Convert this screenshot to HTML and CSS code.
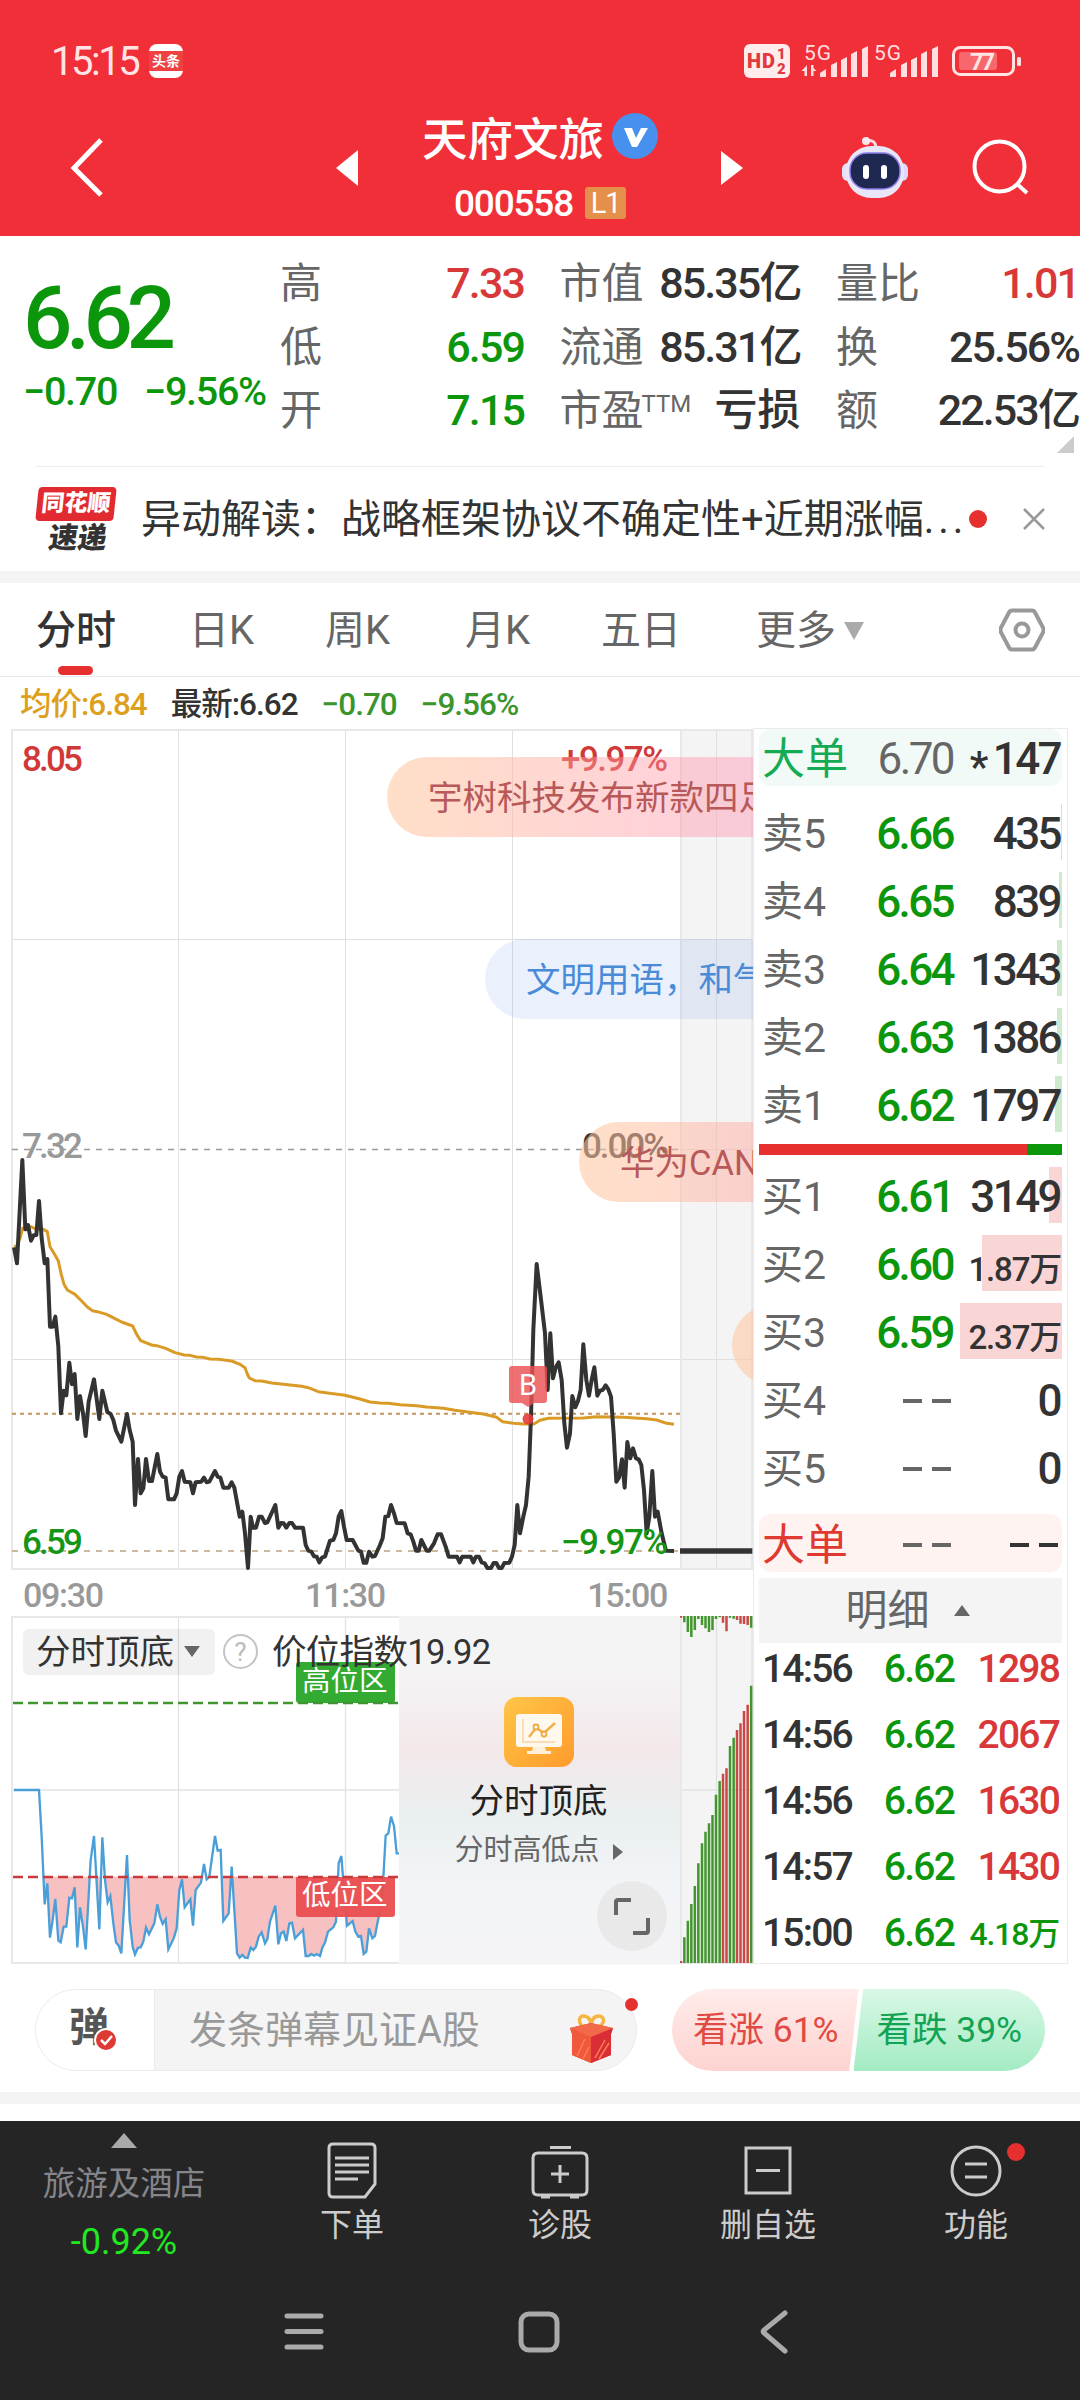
FILE: index.html
```
<!DOCTYPE html>
<html lang="zh-CN">
<head>
    <meta charset="UTF-8">
    <meta name="viewport" content="width=device-width, initial-scale=1.0">
    <title>天府文旅 000558</title>
    <link rel="stylesheet" href="styles.css">
</head>
<body>
    <header class="header">
        <div class="status-bar">
            <span class="clock">15:15</span>
            <span class="app-badge"><span>头条</span></span>
            <svg class="status-icons" width="280" height="44" viewBox="742 39 280 44">
                <rect x="744" y="44" width="46" height="34" rx="6" fill="#ffecec"/>
                <text x="747" y="68" font-size="20" font-weight="900" fill="#e03a40" textLength="28">HD</text>
                <text x="777" y="59" font-size="15" font-weight="900" fill="#e03a40">1</text>
                <text x="777" y="74" font-size="15" font-weight="900" fill="#e03a40">2</text>
                <g fill="#ffdfe0">
                    <text x="804" y="60" font-size="21" textLength="27">5G</text>
                    <text x="874" y="60" font-size="21" textLength="27">5G</text>
                    <path d="M807 65v11h-2.500v-5h-3zM811 76v-11h2.500v3l3 3h-3v5z"/>
                    <path d="M820 77v-4l6-4v8zM831 77v-12l6-3v15zM841 77v-17l6-3v20zM851 77v-23l6-3v26zM862 77v-28l6-3v31z"/>
                    <path d="M890 77v-4l6-4v8zM901 77v-12l6-3v15zM911 77v-17l6-3v20zM921 77v-23l6-3v26zM932 77v-28l6-3v31z"/>
                    <rect x="1017" y="57" width="4" height="9" rx="1.500"/>
                </g>
                <rect x="953.500" y="47.500" width="60" height="27" rx="7" fill="none" stroke="#ffe4e4" stroke-width="3"/>
                <rect x="959" y="52" width="38" height="18" rx="3" fill="#f7686d"/>
                <text x="970" y="70" font-size="24" font-weight="700" fill="#ffe4e4" textLength="25">77</text>
            </svg>
        </div>
        <div class="title-bar">
            <svg class="back" width="40" height="64" viewBox="0 0 40 64"><path d="M35 4L8 32l27 27" fill="none" stroke="#fff" stroke-width="5"/></svg>
            <svg class="prev" width="22" height="36" viewBox="0 0 22 36"><path d="M22 0v36L0 18z" fill="#fff"/></svg>
            <div class="stock">
                <div class="stock-name">天府文旅
                    <svg width="46" height="46" viewBox="0 0 46 46"><circle cx="23" cy="23" r="23" fill="#4790ee"/><path d="M12 15h8l4 10 5-10h7L25 34h-5z" fill="#fff"/></svg>
                </div>
                <div class="stock-code"><span>000558</span><em>L1</em></div>
            </div>
            <svg class="next" width="22" height="34" viewBox="0 0 22 34"><path d="M0 0v34l22-17z" fill="#fff"/></svg>
            <svg class="robot" width="68" height="64" viewBox="841 136 68 64">
                <path d="M866 141c7-2 10 2 10 7" fill="none" stroke="#f9d9e4" stroke-width="3"/>
                <circle cx="866" cy="141" r="4" fill="#fbe6ee"/>
                <rect x="842" y="163" width="12" height="18" rx="6" fill="#e6e3f7"/>
                <rect x="896" y="163" width="12" height="18" rx="6" fill="#dcdaf6"/>
                <rect x="846" y="146" width="58" height="52" rx="25" fill="#e9e6f8"/>
                <rect x="850" y="153" width="50" height="36" rx="17" fill="#1f2850" stroke="#8b7de8" stroke-width="1.500"/>
                <rect x="863" y="165" width="6" height="14" rx="3" fill="#fff"/>
                <rect x="881" y="165" width="6" height="14" rx="3" fill="#fff"/>
            </svg>
            <svg class="search" width="58" height="58" viewBox="972 141 58 58"><circle cx="999.500" cy="168.500" r="25" fill="none" stroke="#fff" stroke-width="4"/><path d="M1017 186l10 9" stroke="#fff" stroke-width="4"/></svg>
        </div>
    </header>

    <section class="quote">
        <div class="price-box">
            <div class="price green">6.62</div>
            <div class="change green"><span>−0.70</span><span>−9.56%</span></div>
        </div>
        <dl class="stats">
            <div><dt>高</dt><dd class="red">7.33</dd></div>
            <div><dt>市值</dt><dd>85.35亿</dd></div>
            <div><dt>量比</dt><dd class="red">1.01</dd></div>
            <div><dt>低</dt><dd class="green">6.59</dd></div>
            <div><dt>流通</dt><dd>85.31亿</dd></div>
            <div><dt>换</dt><dd>25.56%</dd></div>
            <div><dt>开</dt><dd class="green">7.15</dd></div>
            <div><dt>市盈<sup>TTM</sup></dt><dd class="text">亏损</dd></div>
            <div><dt>额</dt><dd>22.53亿</dd></div>
        </dl>
        <span class="corner"></span>
    </section>

    <section class="news">
        <div class="news-logo"><b>同花顺</b><i>速递</i></div>
        <p>异动解读：战略框架协议不确定性+近期涨幅<span>...</span></p>
        <span class="dot"></span>
        <svg width="22" height="22" viewBox="0 0 22 22"><path d="M1 1l20 20M21 1L1 21" stroke="#999" stroke-width="2.500"/></svg>
    </section>

    <nav class="tabs">
        <a class="active">分时</a>
        <a>日K</a>
        <a>周K</a>
        <a>月K</a>
        <a>五日</a>
        <a>更多<span class="caret"></span></a>
        <svg width="46" height="44" viewBox="0 0 46 44"><path d="M13 2.500h20q2 0 3 2l8 15q1 2.500 0 5l-8 15q-1 2-3 2H13q-2 0-3-2l-8-15q-1-2.500 0-5l8-15q1-2 3-2z" fill="none" stroke="#999" stroke-width="4"/><circle cx="23" cy="22" r="6.500" fill="none" stroke="#999" stroke-width="4"/></svg>
    </nav>

    <div class="summary">
        <span class="avg">均价:6.84</span>
        <span>最新:6.62</span>
        <span class="drop">−0.70</span>
        <span class="drop">−9.56%</span>
    </div>

    <main class="board">
        <div class="charts">
            <div class="price-chart">
                <svg width="742" height="841" viewBox="11 729 742 841">
                    <rect x="680" y="729" width="73" height="841" fill="#f4f4f4"/>
                    <path d="M178.500 729v841M345.500 729v841M512.500 729v841M716.500 729v841M12 939.500h741M12 1359.500h741M680 1149.500h73" stroke="#e0e0e0" fill="none"/>
                    <path d="M11 730h742M11 1569h742M12 729v841M681 729v841M752 729v841" stroke="#e8e8e8" stroke-width="2" fill="none"/>
                    <path d="M12 1149.500h668" stroke="#999" stroke-width="1.600" stroke-dasharray="6 6"/>
                    <path d="M12 1413.700h668" stroke="#c4935c" stroke-width="2" stroke-dasharray="4 4"/>
                    <path d="M12 1551h668" stroke="#b9a27c" stroke-width="1.600" stroke-dasharray="6 6"/>
                    <g transform="translate(0 1100) scale(.33333)" fill="none" stroke-linejoin="round">
                        <polyline stroke="#d99b26" stroke-width="9" points="42,440 50,438 60,415 68,385 92,380 110,388 130,388 142,395 150,440 165,465 175,483 183,520 192,553 202,570 225,583 245,603 262,621 277,632 292,635 320,643 345,656 365,666 398,678 410,703 422,722 455,735 470,737 497,745 525,758 553,765 570,766 590,771 610,772 630,777 655,778 695,783 720,793 735,803 742,822 748,834 765,842 785,843 815,849 905,859 925,863 955,875 1000,881 1035,886 1080,897 1110,906 1140,909 1165,910 1200,914 1250,917 1280,921 1330,925 1365,931 1420,938 1450,942 1490,952 1508,965 1540,970 1570,972 1602,972 1620,961 1645,955 1750,954 1790,950 1870,952 1940,956 1970,960 2000,970 2022,973"/>
                        <polyline stroke="#333" stroke-width="12" points="42,442 51,490 67,180 76,388 84,375 93,422 101,406 109,405 117,303 125,415 134,490 142,477 150,680 158,680 166,650 175,740 183,940 191,872 199,886 208,788 216,853 224,822 232,957 240,888 249,940 257,1008 266,905 282,838 298,957 307,872 322,936 332,942 340,960 348,992 364,1025 381,942 389,990 398,1025 405,1215 414,1077 422,1180 430,1165 438,1077 447,1143 456,1143 472,1062 480,1115 488,1130 497,1133 505,1198 522,1198 530,1180 538,1130 546,1113 554,1145 571,1147 579,1180 587,1147 604,1145 612,1133 620,1147 628,1145 645,1113 653,1130 661,1133 670,1163 686,1163 695,1147 703,1163 719,1250 727,1235 735,1300 744,1404 752,1250 759,1283 768,1283 777,1250 785,1250 795,1269 802,1267 826,1215 835,1283 843,1269 851,1270 859,1283 868,1269 876,1269 885,1283 909,1283 917,1335 925,1352 934,1355 942,1369 950,1370 958,1387 967,1372 975,1370 990,1322 1000,1320 1008,1300 1016,1250 1024,1233 1032,1280 1040,1320 1058,1320 1075,1352 1083,1355 1091,1388 1099,1388 1107,1355 1117,1370 1125,1368 1140,1335 1148,1315 1156,1250 1165,1248 1173,1215 1182,1240 1190,1269 1214,1270 1223,1300 1232,1303 1240,1325 1248,1352 1256,1352 1264,1320 1280,1352 1288,1352 1302,1330 1313,1303 1323,1303 1337,1340 1346,1370 1371,1370 1379,1387 1387,1370 1412,1370 1420,1387 1428,1370 1437,1370 1445,1387 1454,1390 1462,1404 1473,1404 1481,1389 1489,1389 1497,1404 1505,1404 1513,1389 1528,1388 1536,1370 1544,1335 1552,1215 1560,1300 1570,1250 1578,1215 1586,1130 1593,950 1600,690 1610,492 1622,590 1635,700 1643,870 1651,700 1659,835 1667,803 1676,787 1685,840 1693,970 1701,1043 1710,1000 1717,888 1726,922 1734,903 1742,870 1750,733 1759,840 1767,887 1775,840 1783,802 1792,887 1800,872 1808,870 1817,856 1825,868 1833,890 1841,1000 1849,1145 1857,1133 1866,1078 1874,1163 1882,1026 1891,1075 1899,1045 1908,1075 1916,1078 1924,1095 1932,1170 1940,1300 1948,1250 1957,1113 1965,1250 1973,1235 1985,1300 1998,1352 2022,1353"/>
                        <path d="M2040 1353h217" stroke="#333" stroke-width="16"/>
                    </g>
                    <path d="M512 1366h32q3 0 3 3v31q0 3-3 3h-10l-6 4-6-4h-10q-3 0-3-3v-31q0-3 3-3z" fill="#ea5054" opacity=".82"/>
                    <text x="519" y="1395" font-size="29" fill="#fff">B</text>
                    <circle cx="528" cy="1419" r="5.500" fill="#e53c3c" opacity=".9"/>
                    <g class="scale">
                        <text x="22" y="771" fill="#d23838" textLength="61">8.05</text>
                        <text x="561" y="771" fill="#d23838" textLength="107">+9.97%</text>
                        <text x="22" y="1158" fill="#999" textLength="61">7.32</text>
                        <text x="582" y="1158" fill="#333" textLength="87">0.00%</text>
                        <text x="22" y="1554" fill="#149614" textLength="61">6.59</text>
                        <text x="561" y="1554" fill="#149614" textLength="107">−9.97%</text>
                    </g>
                </svg>
                <div class="danmaku">
                    <span class="bullet b1">宇树科技发布新款四足</span>
                    <span class="bullet b2">文明用语，和气</span>
                    <span class="bullet b3">华为CANN</span>
                    <span class="bullet b4"></span>
                </div>
            </div>

            <div class="time-axis"><span>09:30</span><span>11:30</span><span>15:00</span></div>

            <div class="sub-chart">
                <svg width="742" height="348" viewBox="11 1616 742 348">
                    <defs>
                        <clipPath id="lowZone"><rect x="0" y="920" width="1197" height="260"/></clipPath>
                        <polyline id="indexLine" points="42,660 117,660 125,800 134,1003 142,940 150,1103 158,1050 166,987 175,1112 182,1117 191,1070 199,1070 208,983 216,985 224,952 232,1132 240,1012 249,1070 257,1138 272,870 282,798 298,1078 307,802 315,930 323,997 331,978 340,1060 348,1117 356,1127 364,1150 381,855 389,1050 398,1130 405,1153 414,1133 422,1132 430,1115 438,1073 447,1093 463,1060 472,1003 480,1040 488,1062 497,1048 505,1138 513,1122 522,1103 530,1075 538,960 546,928 554,1012 571,988 579,1067 587,960 603,938 612,882 620,928 628,920 645,798 653,842 662,840 670,1053 686,1030 695,890 703,1020 711,1150 719,1163 727,1155 735,1163 743,1164 752,1133 760,1140 768,1130 776,1100 785,1087 795,1120 802,1108 810,1055 826,1007 835,1123 843,1090 851,1085 859,1113 868,1060 876,1058 885,1105 909,1080 917,1158 926,1158 934,1152 942,1157 950,1152 960,1158 967,1133 975,1118 984,1085 1000,1072 1008,1055 1016,880 1024,858 1032,960 1041,1067 1058,1053 1066,1085 1075,1100 1083,1098 1091,1152 1099,1145 1107,1075 1117,1105 1125,1098 1133,1055 1141,1020 1148,960 1157,797 1165,790 1173,740 1182,768 1190,850 1197,850"/>
                    </defs>
                    <rect x="680" y="1616" width="73" height="348" fill="#f4f4f4"/>
                    <path d="M178.500 1616v348M345.500 1616v348M716.500 1616v348M12 1790h741" stroke="#e2e2e2" stroke-width="1.300"/>
                    <path d="M11 1617h669M11 1963h742M12 1616v348M681 1616v348M752 1616v348" stroke="#e8e8e8" stroke-width="2"/>
                    <g transform="translate(0 1570) scale(.33333)">
                        <use href="#indexLine" fill="#f7c0c1" clip-path="url(#lowZone)"/>
                        <use href="#indexLine" fill="none" stroke="#4a9fd8" stroke-width="7"/>
                    </g>
                    <!-- auction volume: matched below, unmatched above -->
                    <g transform="translate(390 1570) scale(.33333)" fill="none" stroke-width="7.500">
                        <path stroke="#43962f" d="M883 1179V1102M893.500 1179V1052M904 1179V1002M914.500 1179V948M925 1179V880M936 1179V820M946.500 1179V785M957 1179V760M967.500 1179V735M978 1179V674M989 1179V633M1020 1179V528M1031 1179V503M1083.500 1179V347"/>
                        <path stroke="#cc4747" d="M873 1179V1173M999 1179V611M1009.500 1179V595M1041 1179V480M1051.500 1179V460M1062 1179V423M1073 1179V404"/>
                        <path stroke="#43962f" d="M883 138V157M893.500 138V186M904 138V201M914.500 138V180M925 138V147M936 138V165M946.500 138V175M957 138V186M967.500 138V180M978 138V147M989 138V142M1020 138V143M1031 138V146M1083.500 138V173"/>
                        <path stroke="#cc4747" d="M873 138V143M999 138V158M1009.500 138V184M1041 138V150M1051.500 138V161M1062 138V162M1073 138V165"/>
                    </g>
                    <rect x="296" y="1662" width="99" height="41" rx="3" fill="#33ab33"/>
                    <path d="M296 1877h99v37q0 3-3 3h-93q-3 0-3-3z" fill="#ea4e50" opacity=".95"/>
                    <text x="302" y="1691" font-size="28.500" fill="#fff">高位区</text>
                    <text x="302" y="1905" font-size="28.500" fill="#fff">低位区</text>
                    <path d="M13 1703h385" stroke="#3f9630" stroke-width="2.400" stroke-dasharray="10 5"/>
                    <path d="M13 1877h385" stroke="#c93a3a" stroke-width="2.400" stroke-dasharray="10 5"/>
                </svg>
                <div class="promo">
                    <svg width="70" height="70" viewBox="0 0 70 70">
                        <defs>
                            <linearGradient id="gold" x1="0" y1="0" x2="1" y2="1"><stop offset="0" stop-color="#ffc648"/><stop offset="1" stop-color="#ff9a2b"/></linearGradient>
                        </defs>
                        <rect width="70" height="70" rx="13" fill="url(#gold)"/>
                        <rect x="12" y="17" width="46" height="33" rx="3" fill="#fff8ec"/>
                        <path d="M29 50h12l1 4h5v3H23v-3h5z" fill="#fff1d9"/>
                        <path d="M19 22v23h32" fill="none" stroke="#fbdcb8" stroke-width="2"/>
                        <path d="M25 40l7-9 8 5 11-10" fill="none" stroke="#f2b04c" stroke-width="2.500"/>
                        <circle cx="32" cy="30" r="2.500" fill="#fff" stroke="#f0a73c" stroke-width="1.800"/>
                        <circle cx="40" cy="37" r="2.500" fill="#fff" stroke="#f0a73c" stroke-width="1.800"/>
                    </svg>
                    <h3>分时顶底</h3>
                    <p>分时高低点<span class="arrow"></span></p>
                </div>
                <div class="indicator">
                    <span class="picker">分时顶底<span class="caret"></span></span>
                    <span class="help">?</span>
                    <span class="index">价位指数19.92</span>
                </div>
                <svg class="expand" width="70" height="70" viewBox="0 0 70 70"><circle cx="35" cy="35" r="35" fill="#e9e9ea"/><path d="M19 34V21q0-2 2-2h13M51 37v13q0 2-2 2H36" fill="none" stroke="#666" stroke-width="4"/></svg>
            </div>
        </div>

        <aside class="depth">
            <div class="row big sell"><span>大单</span><span>6.70</span><span><small>*</small>147</span></div>
            <div class="row"><span>卖5</span><span>6.66</span><span>435</span><i style="width:1px"></i></div>
            <div class="row"><span>卖4</span><span>6.65</span><span>839</span><i style="width:3px"></i></div>
            <div class="row"><span>卖3</span><span>6.64</span><span>1343</span><i style="width:5px"></i></div>
            <div class="row"><span>卖2</span><span>6.63</span><span>1386</span><i style="width:5px"></i></div>
            <div class="row"><span>卖1</span><span>6.62</span><span>1797</span><i style="width:7px"></i></div>
            <div class="ratio"><i style="width:268px"></i></div>
            <div class="row buy"><span>买1</span><span>6.61</span><span>3149</span><i style="width:13px"></i></div>
            <div class="row buy"><span>买2</span><span>6.60</span><span class="wan">1.87万</span><i style="width:80px"></i></div>
            <div class="row buy"><span>买3</span><span>6.59</span><span class="wan">2.37万</span><i style="width:102px"></i></div>
            <div class="row none"><span>买4</span><span><s></s><s></s></span><span>0</span></div>
            <div class="row none"><span>买5</span><span><s></s><s></s></span><span>0</span></div>
            <div class="row big bid none"><span>大单</span><span><s></s><s></s></span><span><s></s><s></s></span></div>
            <div class="detail">明细<span></span></div>
            <div class="trade"><span>14:56</span><span>6.62</span><span class="red">1298</span></div>
            <div class="trade"><span>14:56</span><span>6.62</span><span class="red">2067</span></div>
            <div class="trade"><span>14:56</span><span>6.62</span><span class="red">1630</span></div>
            <div class="trade"><span>14:57</span><span>6.62</span><span class="red">1430</span></div>
            <div class="trade"><span>15:00</span><span>6.62</span><span class="wan green">4.18万</span></div>
        </aside>
    </main>

    <section class="comment-bar">
        <div class="comment">
            <div class="toggle">弹<svg width="24" height="24" viewBox="0 0 24 24"><circle cx="12" cy="12" r="11" fill="#dd3a34" stroke="#fff" stroke-width="2"/><path d="M7 12l4 4 7-8" fill="none" stroke="#fff" stroke-width="2.500"/></svg></div>
            <div class="field">发条弹幕见证A股</div>
            <svg class="gift" width="46" height="50" viewBox="0 0 46 50">
                <path d="M22 15C8 16 8 2 15 3s7 7 7 12c0-5 1-12 8-12s7 12-8 12z" fill="none" stroke="#f5b53f" stroke-width="3.500"/>
                <path d="M1 15l21-5 22 5-2 6v21l-20 8L3 42V21z" fill="#ea4632"/>
                <path d="M1 15l21 8v27L3 42V21z" fill="#f0593c"/>
                <path d="M22 23l22-8-2 6v21l-20 8z" fill="#d92e35"/>
                <path d="M1 15l21-5 22 5-22 9z" fill="#f26a4a"/>
                <path d="M8 43l8-17M14 46l6-12M26 45l10-18M30 46l10-16" stroke="#ff7d55" stroke-width="1.500"/>
            </svg>
            <span class="dot"></span>
        </div>
        <div class="vote"><span class="up">看涨 61%</span><span class="down">看跌 39%</span></div>
    </section>
    <div class="band"></div>

    <footer class="footer">
        <div class="menu">
            <div class="sector"><span class="tri"></span><p>旅游及酒店</p><b>-0.92%</b></div>
            <a><svg width="60" height="60" viewBox="0 0 60 60"><path d="M11 4h38q4 0 4 4v36l-10 13H11q-4 0-4-4V8q0-4 4-4zM13 18h34M13 25h34M13 32h34M13 39h23" /></svg>下单</a>
            <a><svg width="60" height="60" viewBox="0 0 60 60"><path d="M8 13h44q5 0 5 5v32q0 5-5 5H8q-5 0-5-5V18q0-5 5-5zM20 7.500h21M30 25v18M21 34h18M11 57h9M40 57h9"/></svg>诊股</a>
            <a><svg width="60" height="60" viewBox="0 0 60 60"><path d="M8 8h44v45H8zM18 30.500h24"/></svg>删自选</a>
            <a><svg width="60" height="60" viewBox="0 0 60 60"><circle cx="30" cy="31" r="24"/><path d="M19 24h22M19 37h22"/></svg>功能<span class="dot"></span></a>
        </div>
        <div class="system-nav">
            <svg width="44" height="44" viewBox="0 0 44 44"><path d="M5 6h34M5 21.500h34M5 37h34"/></svg>
            <svg width="44" height="44" viewBox="0 0 44 44"><rect x="4" y="4" width="36" height="36" rx="8"/></svg>
            <svg width="44" height="44" viewBox="0 0 44 44"><path d="M33 3L12 20q-1.500 1.500 0 3L33 41"/></svg>
        </div>
    </footer>
</body>
</html>
```
FILE: styles.css
```
* {
    margin: 0;
    padding: 0;
    box-sizing: border-box;
}

body {
    width: 1080px;
    height: 2400px;
    overflow: hidden;
    font-family: Roboto, "Noto Sans CJK SC", sans-serif;
    background: #fff;
    color: #333;
}

svg {
    display: block;
    flex: none;
}

i, em {
    font-style: normal;
}

.red {
    color: #d93838;
}

.green {
    color: #0c960c;
}

.dot {
    width: 18px;
    height: 18px;
    border-radius: 50%;
    background: #e63030;
}

/* header */
.header {
    height: 236px;
    background: #f12f38;
    color: #fff;
}

.status-bar {
    display: flex;
    align-items: center;
    height: 122px;
    padding-left: 51px;
}

.clock {
    width: 98px;
    font-size: 40px;
    letter-spacing: -2.500px;
    color: #ffe4e5;
}

.app-badge {
    display: flex;
    align-items: center;
    width: 34px;
    height: 34px;
    border-radius: 8px;
    background: #fff;
}

.app-badge span {
    width: 34px;
    background: #f04142;
    font-size: 14px;
    font-weight: 700;
    line-height: 20px;
    text-align: center;
}

.status-icons {
    margin-left: 559px;
}

.title-bar {
    display: flex;
    align-items: center;
    height: 114px;
    padding-bottom: 22px;
    padding-left: 66px;
}

.prev {
    margin-left: 230px;
}

.stock {
    width: 236px;
    margin: -6px 63px 0 64px;
}

.stock-name {
    display: flex;
    align-items: center;
    justify-content: space-between;
    height: 58px;
    font-size: 45.500px;
    font-weight: 500;
    white-space: nowrap;
}

.stock-code {
    display: flex;
    align-items: center;
    gap: 12px;
    height: 40px;
    margin: 18px 0 0 32px;
    font-size: 37px;
    font-weight: 500;
    letter-spacing: -1.200px;
}

.stock-code em {
    width: 41px;
    height: 32px;
    border-radius: 3px;
    background: #e48f4a;
    font-size: 29px;
    font-weight: 400;
    line-height: 33px;
    text-align: center;
}

.robot {
    margin-left: 98px;
}

.search {
    margin-left: 63px;
}

/* quote */
.quote {
    position: relative;
    display: flex;
    height: 231px;
    padding-top: 16px;
}

.quote::after {
    content: "";
    position: absolute;
    left: 35px;
    right: 35px;
    bottom: 0;
    height: 1px;
    background: #eee;
}

.price-box {
    width: 280px;
    padding-left: 23px;
    white-space: nowrap;
}

.price {
    margin-top: 20px;
    font-size: 87px;
    font-weight: 500;
    line-height: 92px;
    letter-spacing: -6.500px;
}

.change {
    display: flex;
    gap: 27px;
    margin-top: 5px;
    font-size: 39.500px;
    font-weight: 500;
    line-height: 46px;
    letter-spacing: -1.300px;
}

.stats {
    display: grid;
    grid-template-columns: 243px 240px 242px;
    grid-auto-rows: 63.500px;
    column-gap: 36.500px;
    font-size: 42px;
    line-height: 63px;
}

.stats div {
    display: flex;
    justify-content: space-between;
    white-space: nowrap;
}

.stats dt {
    color: #666;
}

.stats dd {
    margin-right: -1px;
    font-size: 43px;
    font-weight: 500;
    letter-spacing: -1.900px;
}

.stats .text {
    letter-spacing: 0;
}

.stats sup {
    margin-left: -2px;
    font-size: 24px;
    line-height: 1;
    vertical-align: 13px;
}

.corner {
    position: absolute;
    right: 6px;
    bottom: 14px;
    border-bottom: 17px solid #ccc;
    border-left: 17px solid transparent;
}

/* news */
.news {
    display: flex;
    align-items: center;
    height: 116px;
    padding-left: 37px;
    border-bottom: 12px solid #f4f4f4;
}

.news p {
    width: 819px;
    margin: -6px 0 0 22px;
    font-size: 40px;
    white-space: nowrap;
}

.news p span {
    letter-spacing: 4px;
}

.news .dot {
    margin-left: 9px;
}

.news svg {
    margin-left: 36px;
}

.news-logo {
    width: 82px;
    padding-top: 4px;
    text-align: center;
}

.news-logo b {
    display: block;
    width: 78px;
    height: 34px;
    border-radius: 4px;
    background: #e22b31;
    color: #fff;
    font-size: 23px;
    font-weight: 900;
    line-height: 33px;
    transform: skewX(-6deg);
}

.news-logo i {
    display: block;
    font-size: 29px;
    font-weight: 900;
    line-height: 34px;
    transform: skewX(-8deg);
}

/* tabs */
.tabs {
    display: grid;
    grid-template-columns: 153px 136px 140px 136px 155px 243px 46px;
    align-items: center;
    height: 94px;
    padding-left: 36px;
    border-bottom: 1px solid #e8e8e8;
    font-size: 40px;
    color: #666;
}

.tabs a {
    position: relative;
    margin-top: -6px;
    white-space: nowrap;
}

.tabs .active {
    color: #333;
    font-weight: 500;
}

.tabs .active::after {
    content: "";
    position: absolute;
    left: 22px;
    bottom: -19px;
    width: 35px;
    height: 9px;
    border-radius: 5px;
    background: #e63030;
}

.caret {
    display: inline-block;
    border-top: 18px solid #aaa;
    border-right: 10px solid transparent;
    border-left: 10px solid transparent;
}

.tabs .caret {
    margin-left: 8px;
    vertical-align: 4px;
}

.summary {
    display: flex;
    gap: 24px;
    height: 51px;
    padding-left: 20px;
    font-size: 31.500px;
    font-weight: 500;
    line-height: 56px;
    letter-spacing: -1px;
}

.summary .avg {
    color: #dda01c;
}

.summary .drop {
    color: #3b942c;
}

/* charts */
.board {
    display: flex;
    height: 1236px;
    padding-left: 11px;
}

.charts {
    width: 742px;
    padding-top: 1px;
}

.price-chart,
.sub-chart {
    position: relative;
}

.scale {
    font-size: 35px;
    font-weight: 500;
}

.danmaku {
    position: absolute;
    inset: 0;
    overflow: hidden;
}

.bullet {
    position: absolute;
    width: 420px;
    height: 80px;
    padding-left: 41px;
    border-radius: 40px;
    background: linear-gradient(90deg, rgba(255, 200, 160, .58), rgba(255, 150, 160, .42) 60%, rgba(255, 150, 190, .46));
    color: #b85858;
    font-size: 34.500px;
    line-height: 82px;
    white-space: nowrap;
}

.b1 {
    left: 376px;
    top: 28px;
}

.b2 {
    left: 474px;
    top: 210px;
    background: rgba(90, 150, 240, .13);
    color: #4a8bd8;
}

.b3 {
    left: 568px;
    top: 393px;
}

.b4 {
    left: 721px;
    top: 576px;
}

.time-axis {
    display: flex;
    justify-content: space-between;
    height: 46px;
    padding: 2px 86px 0 12px;
    color: #999;
    font-size: 34px;
    font-weight: 500;
    line-height: 46px;
    letter-spacing: -1.300px;
}

.promo {
    position: absolute;
    left: 388px;
    top: 0;
    width: 281px;
    height: 349px;
    padding-top: 81px;
    background: linear-gradient(#f5f4f5 15%, #f3e8ea 38%, #eaeff0 58%, #f2f5f7 78%, #f5f4f7);
    text-align: center;
}

.promo svg {
    margin: 0 auto 0 105px;
}

.promo h3 {
    margin: 7px 2px 0 0;
    color: #222;
    font-size: 34.500px;
    font-weight: 400;
    line-height: 54px;
}

.promo p {
    margin-right: 2px;
    color: #666;
    font-size: 29px;
    line-height: 45px;
}

.arrow {
    display: inline-block;
    margin-left: 13px;
    border-top: 8px solid transparent;
    border-bottom: 8px solid transparent;
    border-left: 10px solid #666;
}

.indicator {
    position: absolute;
    left: 12px;
    top: 12px;
    display: flex;
    align-items: center;
    height: 47px;
    font-size: 34.500px;
}

.picker {
    width: 192px;
    padding-left: 13px;
    border-radius: 6px;
    background: rgba(0, 0, 0, .055);
    line-height: 46px;
    white-space: nowrap;
}

.picker .caret {
    margin-left: 10px;
    border-width: 11px 8px 0;
    border-top-color: #666;
    vertical-align: 7px;
}

.help {
    width: 35px;
    height: 35px;
    margin: 0 14px 0 8px;
    border: 2px solid #c4c4c4;
    border-radius: 50%;
    color: #bbb;
    font-size: 26px;
    line-height: 32px;
    text-align: center;
}

.index {
    margin-top: -5px;
    white-space: nowrap;
    letter-spacing: -.700px;
}

.expand {
    position: absolute;
    left: 586px;
    top: 265px;
}

/* order book */
.depth {
    width: 315px;
    padding: 0 5px;
    border: 1px solid #ebebeb;
    font-size: 44px;
    letter-spacing: -2.600px;
}

.row {
    position: relative;
    display: grid;
    grid-template-columns: 90px 101px 107px;
    height: 56px;
    margin-bottom: 12px;
    padding-left: 3px;
    line-height: 61px;
    text-align: right;
}

.row span {
    position: relative;
    z-index: 1;
    font-weight: 500;
    white-space: nowrap;
}

.row span:first-child {
    color: #666;
    font-size: 41px;
    font-weight: 400;
    letter-spacing: 0;
    text-align: left;
}

.row span:nth-child(2) {
    color: #0c960c;
}

.row i {
    position: absolute;
    top: 0;
    right: 0;
    height: 56px;
    background: #cdeacd;
}

.buy i {
    background: #fad5d6;
}

.depth .wan {
    left: 1px;
    font-size: 33px;
    letter-spacing: -1.200px;
    line-height: 69px;
}

.row.big {
    height: 57px;
    margin-bottom: 18px;
    border-radius: 12px;
    line-height: 60px;
}

.sell {
    background: #f1faf6;
}

.row.sell span:first-child {
    color: #14ab54;
}

.row.sell span:nth-child(2) {
    color: #666;
    font-weight: 400;
}

.row.big span:first-child {
    font-size: 43px;
}

.sell small {
    margin-right: 7px;
    font-size: 42px;
    line-height: 1;
    vertical-align: -7px;
}

.ratio {
    height: 11px;
    margin: 1px 0 12px;
    background: #0c960c;
}

.ratio i {
    display: block;
    height: 11px;
    background: #e63030;
}

.row.bid {
    height: 58px;
    margin: 19px 0 6px;
    background: #fff3f2;
    line-height: 62px;
}

.row.bid span:first-child {
    color: #e0392f;
}

.none s {
    display: inline-block;
    width: 19px;
    height: 4px;
    margin: 0 2px 0 8px;
    background: #666;
    vertical-align: 13px;
}

.none span:last-child s {
    background: #333;
}

.detail {
    height: 65px;
    margin-bottom: -7px;
    padding-right: 6px;
    background: #f4f4f4;
    color: #666;
    font-size: 42px;
    line-height: 66px;
    letter-spacing: 0;
    text-align: center;
}

.detail span {
    display: inline-block;
    margin-left: 24px;
    border-right: 8px solid transparent;
    border-bottom: 11px solid #666;
    border-left: 8px solid transparent;
    vertical-align: 9px;
}

.trade {
    display: grid;
    grid-template-columns: 94px 98px 105px;
    height: 66px;
    padding-left: 3px;
    font-size: 39px;
    font-weight: 500;
    line-height: 66px;
    letter-spacing: -1.800px;
    text-align: right;
}

.trade span:first-child {
    text-align: left;
}

.trade span:nth-child(2) {
    color: #0c960c;
}

.trade .wan {
    font-size: 32px;
}

/* comment bar */
.comment-bar {
    display: flex;
    justify-content: space-between;
    height: 128px;
    padding: 25px 35px 0;
}

.comment {
    position: relative;
    display: flex;
    width: 602px;
    height: 82px;
    border: 1px solid #ebebeb;
    border-radius: 41px;
    background: #f4f4f4;
    line-height: 80px;
}

.toggle {
    position: relative;
    width: 119px;
    padding-left: 33px;
    border-right: 1px solid #ebebeb;
    border-radius: 41px 0 0 41px;
    background: #fff;
    color: #555;
    font-size: 40px;
    font-weight: 700;
    line-height: 76px;
}

.toggle svg {
    position: absolute;
    left: 58px;
    top: 38px;
}

.field {
    padding-left: 34px;
    color: #999;
    font-size: 38px;
}

.gift {
    position: absolute;
    left: 533px;
    top: 23px;
}

.comment .dot {
    position: absolute;
    left: 589px;
    top: 8px;
    width: 13px;
    height: 13px;
}

.vote {
    display: flex;
    width: 373px;
    height: 82px;
    border-radius: 41px;
    overflow: hidden;
    font-size: 35.500px;
    line-height: 82px;
    text-align: center;
    white-space: nowrap;
}

.up {
    width: 189px;
    padding-left: 1px;
    background: linear-gradient(#ffecea, #fdd3d0);
    clip-path: polygon(0 0, 100% 0, 95% 100%, 0 100%);
    color: #e04a42;
}

.down {
    width: 194px;
    margin-left: -5px;
    background: linear-gradient(#d9f8e6, #a3ebc3);
    clip-path: polygon(5% 0, 100% 0, 100% 100%, 0 100%);
    color: #12a454;
}

.band {
    height: 12px;
    margin-bottom: 17px;
    background: #f4f4f4;
}

/* footer */
.footer {
    height: 279px;
    background: #252525;
    color: #ccc;
}

.menu {
    display: flex;
    height: 179px;
    font-size: 32px;
    text-align: center;
}

.menu a {
    position: relative;
    width: 208px;
    padding-top: 19px;
    line-height: 51px;
}

.menu a svg {
    margin: 0 auto;
    fill: none;
    stroke: #ccc;
    stroke-width: 3;
}

.menu .dot {
    position: absolute;
    left: 135px;
    top: 22px;
}

.sector {
    width: 248px;
    padding-top: 12px;
}

.tri {
    display: block;
    width: 26px;
    margin: 0 auto;
    border-right: 13px solid transparent;
    border-bottom: 15px solid #aaa;
    border-left: 13px solid transparent;
}

.sector p {
    margin-top: 11px;
    color: #85868c;
    font-size: 32.500px;
    line-height: 50px;
}

.sector b {
    display: block;
    color: #21e821;
    font-size: 36px;
    font-weight: 400;
    line-height: 66px;
}

.system-nav {
    display: flex;
    gap: 191px;
    padding: 10px 0 0 282px;
}

.system-nav svg {
    fill: none;
    stroke: #aaa;
    stroke-width: 5;
    stroke-linecap: round;
}
```
